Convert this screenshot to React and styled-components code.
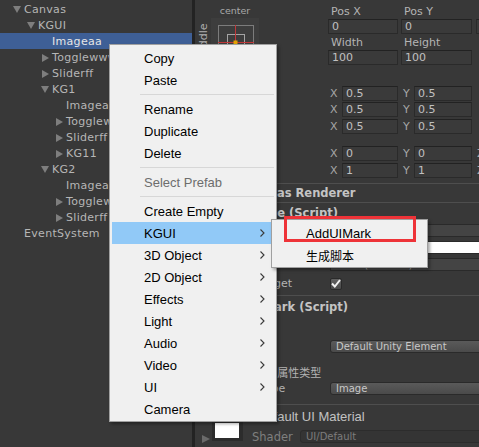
import React from 'react'
import styled, { createGlobalStyle } from 'styled-components'

const UI_FONT = `"DejaVu Sans", "Noto Sans CJK SC", sans-serif`
const MENU_FONT = `"Liberation Sans", "Noto Sans CJK SC", sans-serif`

const GlobalStyle = createGlobalStyle`
    html, body {
        margin: 0;
        padding: 0;
        background: #383838;
        overflow: hidden;
    }
    * {
        box-sizing: border-box;
    }
`

const Screen = styled.div`
    position: relative;
    width: 479px;
    height: 447px;
    display: flex;
    overflow: hidden;
    background: #383838;
    font-family: ${UI_FONT};
    font-size: 11px;
    color: #b6b6b6;
`

/* ---------- hierarchy ---------- */

const Hierarchy = styled.div`
    flex: 0 0 192px;
    padding-top: 1px;
    background: #383838;
`

const TreeRow = styled.div`
    height: 16px;
    display: flex;
    align-items: center;
    padding-left: ${({level}) => 13 + level * 14}px;
    padding-top: 1px;
    background: ${({selected}) => selected ? '#3e5f96' : 'transparent'};
    color: ${({selected}) => selected ? '#e6e6e6' : '#b6b6b6'};
    letter-spacing: 0.3px;
    white-space: nowrap;
`

const ArrowSlot = styled.span`
    flex: 0 0 8px;
    height: 8px;
    margin-right: 3px;
    display: flex;
    align-items: center;
    justify-content: center;
`

const Arrow = styled.span`
    width: 0;
    height: 0;
    ${({open}) => open ? `
        border-left: 4px solid transparent;
        border-right: 4px solid transparent;
        border-top: 7px solid #7e7e7e;
    ` : `
        border-top: 4px solid transparent;
        border-bottom: 4px solid transparent;
        border-left: 7px solid #7e7e7e;
    `}
`

const Splitter = styled.div`
    flex: 0 0 3px;
    background: #232323;
`

/* ---------- inspector ---------- */

const Inspector = styled.div`
    flex: 1;
    min-width: 0;
    overflow: hidden;
`

const RectSection = styled.div`
    height: 183px;
    display: flex;
    padding-top: 4px;
`

const AnchorArea = styled.div`
    flex: 0 0 133px;
    display: flex;
    align-items: flex-start;
    padding-left: 4px;
`

const VerticalLabel = styled.div`
    width: 10px;
    height: 48px;
    margin-top: 14px;
    writing-mode: vertical-rl;
    transform: rotate(180deg);
    text-align: center;
    line-height: 10px;
    color: #b0b0b0;
`

const AnchorCol = styled.div`
    width: 48px;
    margin-left: 2px;
`

const TinyLabel = styled.div`
    height: 14px;
    line-height: 14px;
    font-size: 9.5px;
    text-align: center;
    color: #a8a8a8;
`

const AnchorBox = styled.div`
    width: 48px;
    height: 48px;
    background: #3d3d3d;
    svg {
        display: block;
    }
`

const FieldsArea = styled.div`
    flex: 1;
    min-width: 0;
`

const Line = styled.div`
    display: flex;
    height: ${({h}) => h}px;
    margin-top: ${({mt}) => mt || 0}px;
`

const Cell = styled.div`
    flex: 0 0 ${({w}) => w}px;
    padding-right: ${({gap}) => gap}px;
    display: flex;
    align-items: center;
    min-width: 0;
    white-space: nowrap;
`

const FieldLabel = styled.span`
    padding-left: 3px;
    color: #b4b4b4;
`

const AxisLabel = styled.span`
    flex: 0 0 ${({w}) => w}px;
    padding-left: ${({pad}) => pad}px;
    color: #a6a6a6;
`

const NumField = styled.div`
    flex: 1;
    height: 100%;
    padding-left: 3px;
    line-height: 13px;
    background: #3a3a3a;
    border: 1px solid #2a2a2a;
    border-top-color: #222;
    color: #c0c0c0;
    overflow: hidden;
`

const ComponentHeader = styled.div`
    height: ${({h}) => h}px;
    border-top: 1px solid #4e4e4e;
    display: flex;
    align-items: center;
    padding-left: 50px;
    font-size: 11.5px;
    font-weight: bold;
    color: #c4c4c4;
    white-space: nowrap;
`

const Body = styled.div`
    padding-bottom: ${({pb}) => pb}px;
`

const PropRow = styled.div`
    height: ${({h}) => h || 17}px;
    margin-top: ${({mt}) => mt || 0}px;
    display: flex;
    align-items: center;
`

const PropLabel = styled.div`
    flex: 0 0 135px;
    padding-left: 16px;
    white-space: nowrap;
    overflow: hidden;
    color: #b4b4b4;
`

const PropValue = styled.div`
    flex: 1;
    min-width: 0;
    margin-right: -12px;
    display: flex;
    align-items: center;
`

const NoteLabel = styled.div`
    padding-left: 16px;
    white-space: nowrap;
    color: #b4b4b4;
`

const ObjectField = styled.div`
    flex: 1;
    height: 13px;
    background: #444;
    border: 1px solid #2a2a2a;
    padding-left: 4px;
    font-size: 10px;
    line-height: 11px;
    color: #b0b0b0;
    white-space: nowrap;
`

const ColorBar = styled.div`
    flex: 1;
    height: 13px;
    background: #fff;
    border: 1px solid #2a2a2a;
`

const Checkbox = styled.div`
    width: 12px;
    height: 12px;
    border-radius: 2px;
    border: 1px solid #2a2a2a;
    background: linear-gradient(#616161, #4b4b4b);
    display: flex;
    align-items: center;
    justify-content: center;
`

const Dropdown = styled.div`
    flex: 1;
    height: 13px;
    border-radius: 3px;
    border: 1px solid ${({flat}) => flat ? '#2c2c2c' : '#2a2a2a'};
    background: ${({flat}) => flat ? '#343434' : 'linear-gradient(#5a5a5a, #4a4a4a)'};
    padding-left: 5px;
    font-size: 10px;
    line-height: 11px;
    color: ${({flat}) => flat ? '#7c7c7c' : '#c8c8c8'};
    white-space: nowrap;
`

const MaterialSection = styled.div`
    border-top: 1px solid #4e4e4e;
    display: flex;
    align-items: flex-start;
    padding-left: 7px;
`

const Foldout = styled.span`
    margin-top: 30px;
    width: 0;
    height: 0;
    border-top: 4px solid transparent;
    border-bottom: 4px solid transparent;
    border-left: 8px solid #6a6a6a;
`

const Preview = styled.div`
    margin: 15px 0 0 2px;
    width: 31px;
    height: 21px;
    padding: 3px 4px 3px 3px;
    background: #2c2c2c;
    div {
        height: 100%;
        background: #fff;
    }
`

const MaterialInfo = styled.div`
    flex: 1;
    min-width: 0;
    margin-left: 9px;
    padding-top: 3px;
`

const MaterialTitle = styled.div`
    padding-left: 5px;
    line-height: 18px;
    font-family: ${MENU_FONT};
    font-size: 13px;
    color: #c2c2c2;
    white-space: nowrap;
`

const ShaderRow = styled.div`
    display: flex;
    align-items: center;
    height: 13px;
    margin-top: 4px;
    margin-right: -12px;
`

const ShaderLabel = styled.span`
    flex: 0 0 48px;
    font-size: 11.5px;
    color: #7f7f7f;
`

/* ---------- context menu ---------- */

const PopupMenu = styled.div`
    position: absolute;
    left: ${({x}) => x}px;
    top: ${({y}) => y}px;
    width: ${({w}) => w}px;
    padding: 2px 2px 1px;
    background: #f0f0f0;
    border: 1px solid #a0a0a0;
    box-shadow: 2px 2px 3px rgba(0, 0, 0, 0.35);
    font-family: ${MENU_FONT};
    font-size: 13px;
    color: #000;
`

const MenuItem = styled.div`
    height: 22px;
    display: flex;
    align-items: center;
    justify-content: space-between;
    padding: 0 9px 0 32px;
    background: ${({active}) => active ? '#91c9f7' : 'transparent'};
    color: ${({disabled}) => disabled ? '#6d6d6d' : '#000'};
    font-size: ${({cjk}) => cjk ? 12 : 13}px;
    white-space: nowrap;
`

const Separator = styled.div`
    height: 7px;
    padding-top: 3px;
    margin-left: 28px;
    &::after {
        content: '';
        display: block;
        height: 1px;
        background: #d7d7d7;
    }
`

const Callout = styled.div`
    position: absolute;
    left: 284px;
    top: 216px;
    width: 132px;
    height: 26px;
    border: 3px solid #ee3338;
    pointer-events: none;
`

const Chevron = () => (
    <svg width="5" height="8" viewBox="0 0 5 8">
        <polyline points="0.5,0.5 4,4 0.5,7.5" fill="none" stroke="#3a3a3a" strokeWidth="1.1" />
    </svg>
)

const tree = [
    {name: 'Canvas', level: 0, arrow: 'open'},
    {name: 'KGUI', level: 1, arrow: 'open'},
    {name: 'Imageaa', level: 2, selected: true},
    {name: 'Togglewww', level: 2, arrow: 'closed'},
    {name: 'Sliderff', level: 2, arrow: 'closed'},
    {name: 'KG1', level: 2, arrow: 'open'},
    {name: 'Imageaa', level: 3},
    {name: 'Togglewww', level: 3, arrow: 'closed'},
    {name: 'Sliderff', level: 3, arrow: 'closed'},
    {name: 'KG11', level: 3, arrow: 'closed'},
    {name: 'KG2', level: 2, arrow: 'open'},
    {name: 'Imageaa', level: 3},
    {name: 'Togglewww', level: 3, arrow: 'closed'},
    {name: 'Sliderff', level: 3, arrow: 'closed'},
    {name: 'EventSystem', level: 0},
]

const menu = [
    {label: 'Copy'},
    {label: 'Paste'},
    {sep: true},
    {label: 'Rename'},
    {label: 'Duplicate'},
    {label: 'Delete'},
    {sep: true},
    {label: 'Select Prefab', disabled: true},
    {sep: true},
    {label: 'Create Empty'},
    {label: 'KGUI', sub: true, active: true},
    {label: '3D Object', sub: true},
    {label: '2D Object', sub: true},
    {label: 'Effects', sub: true},
    {label: 'Light', sub: true},
    {label: 'Audio', sub: true},
    {label: 'Video', sub: true},
    {label: 'UI', sub: true},
    {label: 'Camera'},
]

const cols = [{w: 73, gap: 3}, {w: 75, gap: 4}, {w: 60, gap: 0}]

const xyRows = [
    {x: '0.5', y: '0.5', mt: 21},
    {x: '0.5', y: '0.5', mt: 1},
    {x: '0.5', y: '0.5', mt: 2},
    {x: '0', y: '0', z: true, mt: 12},
    {x: '1', y: '1', z: true, mt: 2},
]

function AnchorPreset() {
    return (
        <AnchorBox>
            <svg width="48" height="48" viewBox="0 0 48 48">
                <rect x="7.5" y="7.5" width="35" height="35" fill="none" stroke="#7c7c7c" />
                <rect x="16.5" y="16.5" width="17" height="17" fill="none" stroke="#a4a4a4" />
                <line x1="24.5" y1="7" x2="24.5" y2="43" stroke="#c0383a" />
                <line x1="7" y1="24.5" x2="43" y2="24.5" stroke="#c0383a" />
                <rect x="22.5" y="22.5" width="4" height="4" fill="#e4a400" />
            </svg>
        </AnchorBox>
    )
}

function App() {
    return (
        <Screen>
            <GlobalStyle />
            <Hierarchy>
                {tree.map((item, index) => (
                    <TreeRow key={index} level={item.level} selected={item.selected}>
                        <ArrowSlot>{item.arrow && <Arrow open={item.arrow === 'open'} />}</ArrowSlot>
                        {item.name}
                    </TreeRow>
                ))}
            </Hierarchy>
            <Splitter />
            <Inspector>
                <RectSection>
                    <AnchorArea>
                        <VerticalLabel>middle</VerticalLabel>
                        <AnchorCol>
                            <TinyLabel>center</TinyLabel>
                            <AnchorPreset />
                        </AnchorCol>
                    </AnchorArea>
                    <FieldsArea>
                        <Line h={15}>
                            {['Pos X', 'Pos Y', 'Pos Z'].map((t, i) => (
                                <Cell key={t} w={cols[i].w} gap={cols[i].gap}><FieldLabel>{t}</FieldLabel></Cell>
                            ))}
                        </Line>
                        <Line h={15}>
                            {['0', '0', '0'].map((v, i) => (
                                <Cell key={i} w={cols[i].w} gap={cols[i].gap}><NumField>{v}</NumField></Cell>
                            ))}
                        </Line>
                        <Line h={15} mt={1}>
                            {['Width', 'Height'].map((t, i) => (
                                <Cell key={t} w={cols[i].w} gap={cols[i].gap}><FieldLabel>{t}</FieldLabel></Cell>
                            ))}
                        </Line>
                        <Line h={15}>
                            {['100', '100'].map((v, i) => (
                                <Cell key={i} w={cols[i].w} gap={cols[i].gap}><NumField>{v}</NumField></Cell>
                            ))}
                        </Line>
                        {xyRows.map((row, i) => (
                            <Line key={i} h={15} mt={row.mt}>
                                <Cell w={cols[0].w} gap={cols[0].gap}>
                                    <AxisLabel w={14} pad={2}>X</AxisLabel>
                                    <NumField>{row.x}</NumField>
                                </Cell>
                                <Cell w={cols[1].w} gap={cols[1].gap}>
                                    <AxisLabel w={13} pad={2}>Y</AxisLabel>
                                    <NumField>{row.y}</NumField>
                                </Cell>
                                {row.z && (
                                    <Cell w={cols[2].w} gap={0}>
                                        <AxisLabel w={12} pad={1}>Z</AxisLabel>
                                        <NumField>{row.x}</NumField>
                                    </Cell>
                                )}
                            </Line>
                        ))}
                    </FieldsArea>
                </RectSection>

                <ComponentHeader h={19}>Canvas Renderer</ComponentHeader>

                <ComponentHeader h={20}>Image (Script)</ComponentHeader>
                <Body pb={3}>
                    <PropRow>
                        <PropLabel>Source Image</PropLabel>
                        <PropValue><ObjectField>None (Sprite)</ObjectField></PropValue>
                    </PropRow>
                    <PropRow>
                        <PropLabel>Color</PropLabel>
                        <PropValue><ColorBar /></PropValue>
                    </PropRow>
                    <PropRow>
                        <PropLabel>Material</PropLabel>
                        <PropValue><ObjectField>None (Material)</ObjectField></PropValue>
                    </PropRow>
                    <PropRow mt={2}>
                        <PropLabel>Raycast Target</PropLabel>
                        <PropValue>
                            <Checkbox>
                                <svg width="10" height="9" viewBox="0 0 10 9">
                                    <polyline points="1,4.5 3.8,7.5 9,1" fill="none" stroke="#f2f2f2" strokeWidth="2" />
                                </svg>
                            </Checkbox>
                        </PropValue>
                    </PropRow>
                </Body>

                <ComponentHeader h={23}>UI Mark (Script)</ComponentHeader>
                <Body pb={8}>
                    <PropRow h={16}>
                        <NoteLabel>UI元素类型</NoteLabel>
                    </PropRow>
                    <PropRow mt={4}>
                        <PropLabel>Mark Type</PropLabel>
                        <PropValue><Dropdown>Default Unity Element</Dropdown></PropValue>
                    </PropRow>
                    <PropRow h={16} mt={9}>
                        <NoteLabel>当前UI元素的属性类型</NoteLabel>
                    </PropRow>
                    <PropRow h={16}>
                        <PropLabel>Element Type</PropLabel>
                        <PropValue><Dropdown>Image</Dropdown></PropValue>
                    </PropRow>
                </Body>

                <MaterialSection>
                    <Foldout />
                    <Preview><div /></Preview>
                    <MaterialInfo>
                        <MaterialTitle>Default UI Material</MaterialTitle>
                        <ShaderRow>
                            <ShaderLabel>Shader</ShaderLabel>
                            <Dropdown flat>UI/Default</Dropdown>
                        </ShaderRow>
                    </MaterialInfo>
                </MaterialSection>
            </Inspector>

            <PopupMenu x={109} y={44} w={168}>
                {menu.map((item, index) => item.sep ? (
                    <Separator key={index} />
                ) : (
                    <MenuItem key={index} active={item.active} disabled={item.disabled}>
                        <span>{item.label}</span>
                        {item.sub && <Chevron />}
                    </MenuItem>
                ))}
            </PopupMenu>

            <PopupMenu x={271} y={219} w={157}>
                <MenuItem><span>AddUIMark</span></MenuItem>
                <MenuItem cjk><span>生成脚本</span></MenuItem>
            </PopupMenu>

            <Callout />
        </Screen>
    )
}

export default App
